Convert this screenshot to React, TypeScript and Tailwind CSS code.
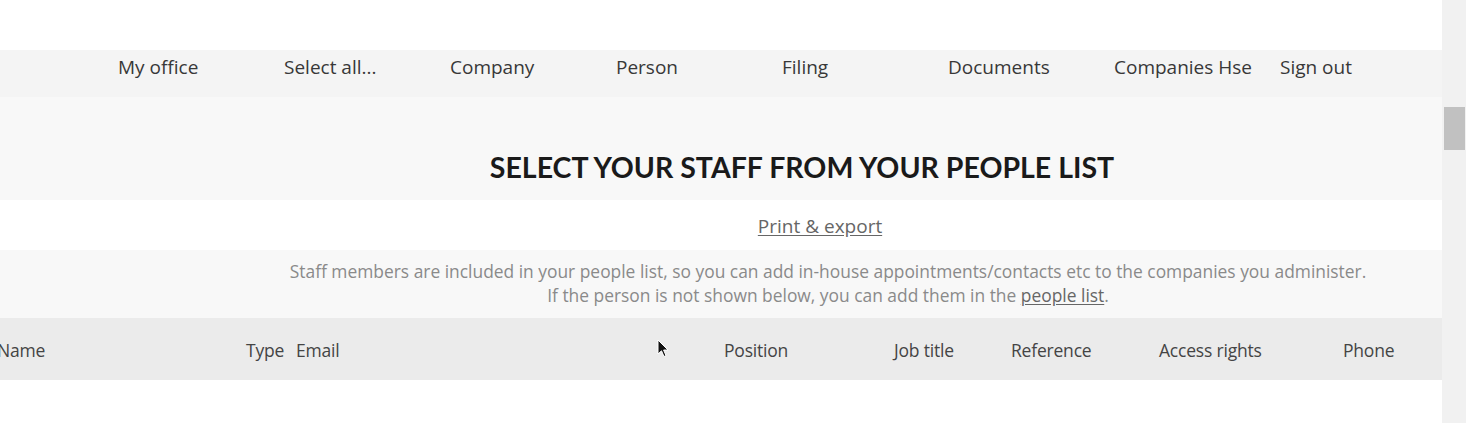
import React from 'react'

const NAV_ITEMS = ['My office', 'Select all...', 'Company', 'Person', 'Filing', 'Documents', 'Companies Hse', 'Sign out']

const COLUMNS = [
  { label: 'Name', width: 'w-[249px] -ml-[3px]' },
  { label: 'Type', width: 'w-[50px]' },
  { label: 'Email', width: 'w-[428px]' },
  { label: 'Position', width: 'w-[170px]' },
  { label: 'Job title', width: 'w-[117px]' },
  { label: 'Reference', width: 'w-[148px]' },
  { label: 'Access rights', width: 'w-[184px]' },
  { label: 'Phone', width: 'w-[80px]' }
]

function Cursor() {
  return (
    <svg className="absolute left-[657px] top-[339px]" width="12" height="20" viewBox="0 0 12 20">
      <path d="M1 1 L1 15 L4.5 11.8 L7 17.5 L9 16.6 L6.6 11 L11 11 Z" fill="#111" stroke="#fff" strokeWidth="1" />
    </svg>
  )
}

export default function App() {
  return (
    <div className="relative flex h-[423px] w-[1466px] overflow-hidden bg-white font-['Open_Sans',sans-serif]">
      <div className="flex w-[1442px] shrink-0 flex-col">
        {/* top spacer */}
        <div className="h-[50px] bg-white" />

        {/* Nav */}
        <nav className="flex h-[47px] items-center bg-[#f4f4f4] pb-[12px] pl-[118px] text-[19px] text-[#383838]">
          {NAV_ITEMS.map((item) => (
            <div key={item} className="w-[166px] shrink-0 whitespace-nowrap leading-none">
              {item}
            </div>
          ))}
        </nav>

        {/* Heading */}
        <div className="flex h-[103px] items-center justify-center bg-[#f8f8f8] pl-[162px] pt-[38px]">
          <h1 className="font-['Lato',sans-serif] text-[28.5px] font-bold leading-none text-[#1a1a1a]">
            SELECT YOUR STAFF FROM YOUR PEOPLE LIST
          </h1>
        </div>

        {/* Print & export */}
        <div className="flex h-[50px] items-center justify-center bg-white pl-[198px] pt-[2px]">
          <a className="text-[19px] text-[#666] underline underline-offset-2">Print &amp; export</a>
        </div>

        {/* Intro */}
        <div className="flex h-[68px] flex-col items-center justify-center bg-[#f8f8f8] pl-[214px] pb-[2px] text-[17.4px] leading-[24px] text-[#8a8a8a]">
          <p>Staff members are included in your people list, so you can add in-house appointments/contacts etc to the companies you administer.</p>
          <p>
            If the person is not shown below, you can add them in the{' '}
            <a className="text-[#666] underline underline-offset-2">people list</a>.
          </p>
        </div>

        {/* Table header */}
        <div className="flex h-[62px] items-center bg-[#ebebeb] pt-[3px] text-[17.5px] tracking-[-0.2px] text-[#444]">
          {COLUMNS.map((col) => (
            <div key={col.label} className={`${col.width} shrink-0 whitespace-nowrap`}>
              {col.label}
            </div>
          ))}
        </div>

        <div className="flex-1 bg-white" />
      </div>

      {/* Scrollbar */}
      <div className="flex w-[24px] shrink-0 flex-col bg-[#f1f1f1]">
        <div className="ml-[2px] mt-[107px] h-[43px] w-[21px] bg-[#c1c1c1]" />
      </div>

      <Cursor />
    </div>
  )
}
